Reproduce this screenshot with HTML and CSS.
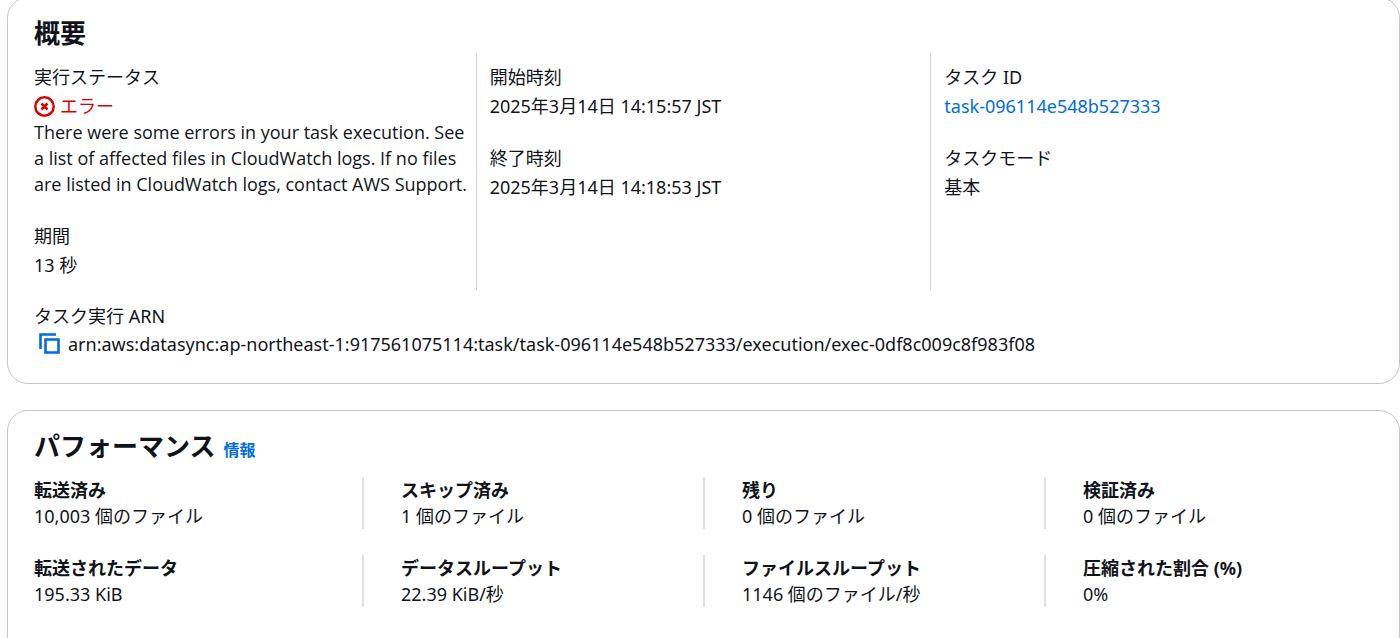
FILE: index.html
```html
<!DOCTYPE html>
<html lang="ja">
<head>
  <meta charset="UTF-8">
  <meta name="viewport" content="width=device-width, initial-scale=1.0">
  <title>タスク実行</title>
  <link rel="stylesheet" href="styles.css">
</head>
<body>
  <main class="page">

    <!-- Overview -->
    <section class="card overview">
      <h2 class="card-title">概要</h2>
      <div class="overview-grid">
        <dl class="column">
          <div class="field">
            <dt>実行ステータス</dt>
            <dd>
              <span class="status-error">
                <svg class="status-icon" viewBox="0 0 21 21" aria-hidden="true">
                  <circle cx="10.5" cy="10.5" r="9.2" />
                  <path d="M7.5 7.5l6 6M13.5 7.5l-6 6" />
                </svg>
                エラー
              </span>
              <p class="status-text">There were some errors in your task execution. See<br>a list of affected files in CloudWatch logs. If no files are listed in CloudWatch logs, contact AWS Support.</p>
            </dd>
          </div>
          <div class="field">
            <dt>期間</dt>
            <dd>13 秒</dd>
          </div>
        </dl>
        <dl class="column">
          <div class="field">
            <dt>開始時刻</dt>
            <dd>2025年3月14日 14:15:57 JST</dd>
          </div>
          <div class="field">
            <dt>終了時刻</dt>
            <dd>2025年3月14日 14:18:53 JST</dd>
          </div>
        </dl>
        <dl class="column">
          <div class="field">
            <dt>タスク ID</dt>
            <dd><a href="#task">task-096114e548b527333</a></dd>
          </div>
          <div class="field">
            <dt>タスクモード</dt>
            <dd>基本</dd>
          </div>
        </dl>
      </div>
      <dl class="arn">
        <dt>タスク実行 ARN</dt>
        <dd class="arn-value">
          <button class="copy-btn" type="button" aria-label="ARN をコピー">
            <svg viewBox="0 0 22 22" aria-hidden="true">
              <path d="M1.5 16V1.5H17" />
              <path d="M6.5 6.5h13v13h-13z" />
            </svg>
          </button>
          <span>arn:aws:datasync:ap-northeast-1:917561075114:task/task-096114e548b527333/execution/exec-0df8c009c8f983f08</span>
        </dd>
      </dl>
    </section>

    <!-- Performance -->
    <section class="card performance">
      <div class="card-header">
        <h2 class="card-title">パフォーマンス</h2>
        <a class="info-link" href="#info">情報</a>
      </div>
      <dl class="metrics">
        <div class="metric">
          <dt>転送済み</dt>
          <dd>10,003 個のファイル</dd>
        </div>
        <div class="metric">
          <dt>スキップ済み</dt>
          <dd>1 個のファイル</dd>
        </div>
        <div class="metric">
          <dt>残り</dt>
          <dd>0 個のファイル</dd>
        </div>
        <div class="metric">
          <dt>検証済み</dt>
          <dd>0 個のファイル</dd>
        </div>
        <div class="metric">
          <dt>転送されたデータ</dt>
          <dd>195.33 KiB</dd>
        </div>
        <div class="metric">
          <dt>データスループット</dt>
          <dd>22.39 KiB/秒</dd>
        </div>
        <div class="metric">
          <dt>ファイルスループット</dt>
          <dd>1146 個のファイル/秒</dd>
        </div>
        <div class="metric">
          <dt>圧縮された割合 (%)</dt>
          <dd>0%</dd>
        </div>
      </dl>
    </section>

  </main>
</body>
</html>
```
FILE: styles.css
```css
* { margin: 0; padding: 0; box-sizing: border-box; }

body {
  font-family: "Noto Sans", "Noto Sans CJK JP", sans-serif;
  font-size: 18px;
  line-height: 26px;
  color: #0f141a;
  background: #fff;
}

a { color: #006ce0; text-decoration: none; }
a:hover { text-decoration: underline; }

.page {
  display: flex;
  flex-direction: column;
  gap: 26px;
  margin-top: -3px;
  padding-left: 7px;
}

.card {
  border: 1px solid #c6c6cd;
  border-radius: 21px;
  padding: 19px 14px 26px 13px;
}

.card-title {
  font-size: 26px;
  line-height: 32px;
  font-weight: 700;
}

.overview .card-title { padding: 0 13px; }

/* Overview columns */
.overview-grid {
  display: grid;
  grid-template-columns: repeat(3, 1fr);
  margin-top: 4px;
}

.column {
  display: flex;
  flex-direction: column;
  gap: 26px;
  padding: 11px 0 12px 13px;
  border-left: 1px solid #d5d5da;
}
.column:first-child { border-left: none; }

.field dd { margin-top: 3px; }

.status-error {
  display: flex;
  align-items: center;
  gap: 5px;
  color: #db0000;
}
.status-icon {
  width: 21px;
  height: 21px;
  fill: none;
  stroke: currentColor;
  stroke-width: 2.5;
}
.status-text { font-family: "Open Sans", "Noto Sans", sans-serif; }

.arn { padding: 0 13px; margin-top: 13px; }
.arn-value {
  display: flex;
  align-items: center;
  gap: 7px;
  margin-top: 2px;
  padding-left: 5px;
}
.copy-btn {
  width: 22px;
  height: 22px;
  border: none;
  background: none;
  cursor: pointer;
}
.copy-btn svg {
  display: block;
  fill: none;
  stroke: #006ce0;
  stroke-width: 2.6;
}

/* Performance metrics */
.card-header {
  display: flex;
  align-items: baseline;
  gap: 8px;
  padding: 0 13px;
}
.info-link { font-size: 16px; font-weight: 700; }

.metrics {
  display: grid;
  grid-template-columns: repeat(4, 1fr);
  row-gap: 26px;
  margin-top: 14px;
  padding-bottom: 26px;
}
.metric {
  padding-left: 37px;
  border-left: 2px solid #e1e1e5;
}
.metric:nth-child(4n+1) { padding-left: 13px; border-left: none; }
.metric dt { font-weight: 700; }
```
